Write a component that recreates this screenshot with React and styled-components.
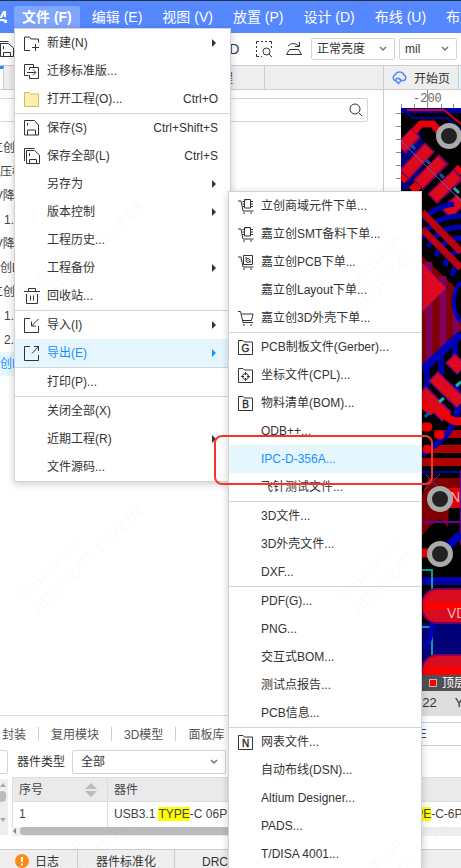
import React, { useState } from "react";
import styled, { createGlobalStyle } from "styled-components";

const GlobalStyle = createGlobalStyle`
  * {
    box-sizing: border-box;
  }
  body {
    margin: 0;
    background: #fff;
  }
  body, button, input, select, table {
    font-family: "Liberation Sans", "Noto Sans CJK SC", sans-serif;
    font-size: 12px;
    color: #333;
  }
`;

const Page = styled.div`
  position: relative;
  display: flex;
  flex-direction: column;
  height: 100vh;
  overflow: hidden;
  line-height: 16px;
`;

/* top bars */

const MenuBar = styled.nav`
  display: flex;
  align-items: center;
  gap: 4px;
  flex: none;
  height: 33px;
  border-top: 1px solid #26324a;
  background: #5588ff;
  overflow: hidden;
`;

const Logo = styled.svg`
  flex: none;
  width: 10px;
  height: 16px;
`;

const MenuButton = styled.button`
  flex: none;
  height: 22px;
  padding: 0 8px;
  border: none;
  border-radius: 2px;
  background: ${props => (props.$open ? "#7fa5ff" : "transparent")};
  color: #fff;
  font-size: 14px;
  font-weight: ${props => (props.$open ? "bold" : "normal")};
  line-height: 20px;
  white-space: nowrap;
`;

const Toolbar = styled.div`
  display: flex;
  align-items: center;
  flex: none;
  height: 32px;
  padding-right: 4px;
  gap: 4px;
  background: #fff;
`;

const ToolButton = styled.button`
  display: flex;
  align-items: center;
  justify-content: center;
  width: 26px;
  height: 24px;
  padding: 0;
  border: none;
  background: none;
  font-size: 14px;
`;

const TextTool = styled(ToolButton)`
  padding-right: 7px;
`;

const SaveTool = styled(ToolButton)`
  justify-content: flex-end;
  width: 14px;
  margin-right: auto;

  svg {
    flex: none;
  }
`;

const SelectBox = styled.div`
  position: relative;
  flex: none;
  width: ${props => props.$width}px;
  height: ${props => props.$height || 22}px;
`;

const Select = styled.select`
  width: 100%;
  height: 100%;
  padding: 0 20px 0 ${props => props.$indent || 5}px;
  border: 1px solid #d4d4d4;
  border-radius: 2px;
  background: #fff;
  appearance: none;
`;

const Chevron = styled.svg`
  position: absolute;
  right: 8px;
  top: 50%;
  width: 8px;
  height: 6px;
  margin-top: -3px;
  pointer-events: none;
`;

/* work area */

const Work = styled.div`
  display: flex;
  flex: 1;
  min-height: 0;
`;

const Side = styled.section`
  display: flex;
  flex-direction: column;
  flex: none;
  width: 384px;
  border-right: 1px solid #ccc;
`;

const TabRow = styled.div`
  display: flex;
  flex: none;
  height: 25px;
  border-top: 1px solid #ccc;
  border-bottom: 1px solid #ccc;
  background: #eee;
`;

const ActiveEdge = styled.div`
  width: 4px;
  border-top: 3px solid #1890ff;
  border-right: 1px solid #ccc;
  background: #fff;
`;

const SideTab = styled.button`
  width: 261px;
  padding: 0 31px 0 0;
  border: none;
  border-right: 1px solid #ccc;
  background: none;
  color: #1d3a7a;
  text-align: right;
`;

const Search = styled.label`
  display: flex;
  align-items: center;
  flex: none;
  height: 24px;
  margin: 8px 15px 14px 0;
  padding-right: 4px;
  border: 1px solid #d4d4d4;
  border-left: none;
  border-radius: 2px;
`;

const SearchInput = styled.input`
  flex: 1;
  min-width: 0;
  border: none;
  outline: none;
  background: none;
`;

const Tree = styled.ul`
  margin: 0 0 0 -12px;
  padding: 0;
  list-style: none;
`;

const TreeRow = styled.li`
  height: 24px;
  padding-left: ${props => props.$indent}px;
  background: ${props => (props.$active ? "#e6f7ff" : "none")};
  color: ${props => (props.$active ? "#1890ff" : "#444")};
  line-height: 24px;
  white-space: nowrap;
`;

const Editor = styled.section`
  display: flex;
  flex-direction: column;
  flex: 1;
  min-width: 0;
  overflow: hidden;
`;

const EditorTab = styled.button`
  display: flex;
  align-items: center;
  gap: 6px;
  flex: none;
  width: 75px;
  padding: 0 0 0 7px;
  border: none;
  border-right: 1px solid #ccc;
  background: none;
  white-space: nowrap;
`;

const EditorTabActive = styled.div`
  flex: 1;
  background: #e4f5ff;
`;

const Board = styled.div`
  display: grid;
  grid-template-columns: 17px 1fr;
  grid-template-rows: 18px 1fr;
  flex: 1;
  min-height: 0;
`;

const TopRuler = styled.svg`
  grid-column: 1 / 3;
  width: 100%;
  height: 18px;
`;

const SideRuler = styled.svg`
  width: 17px;
  height: 100%;
`;

const RulerText = styled.text`
  font-family: "Liberation Mono", monospace;
  font-size: 12px;
  fill: #666;
`;

const Pcb = styled.svg`
  width: 100%;
  height: 100%;
  min-height: 0;
  background: #000;
`;

const PadText = styled.text`
  font-size: 14px;
  fill: #ffb0b0;
`;

const LayerBar = styled.div`
  display: flex;
  align-items: center;
  gap: 5px;
  flex: none;
  height: 16px;
  padding-left: 45px;
  background: #505050;
  color: #fff;
  white-space: nowrap;
`;

const Swatch = styled.span`
  flex: none;
  width: 8px;
  height: 8px;
  border: 1px solid #bbb;
  background: #f00;
`;

const StatusBar = styled.div`
  display: flex;
  gap: 18px;
  flex: none;
  height: 24px;
  padding-left: 31px;
  background: #ddd;
  font-size: 13px;
  line-height: 24px;
  white-space: nowrap;
`;

/* bottom panel */

const Bottom = styled.section`
  flex: none;
  border-top: 1px solid #ddd;
`;

const LibTabs = styled.div`
  display: flex;
  align-items: center;
  height: 34px;
  padding: 2px 0 0 2px;
`;

const LibTab = styled.button`
  flex: none;
  height: 14px;
  margin-right: 12px;
  padding: 0 12px 0 0;
  border: none;
  border-right: 1px solid #ccc;
  background: none;
  color: #555;
  line-height: 16px;
`;

const LibInput = styled.input`
  flex: 1;
  min-width: 0;
  height: 24px;
  margin-left: 4px;
  padding: 0 0 0 141px;
  border: 1px solid #ccc;
  border-right: none;
  color: #1d4a8a;
`;

const Filters = styled.div`
  display: flex;
  align-items: center;
  height: 24px;
  margin-bottom: 3px;
`;

const FilterEdge = styled.div`
  width: 8px;
  height: 24px;
  margin-right: 9px;
  border: 1px solid #d4d4d4;
  border-left: none;
  border-radius: 0 2px 2px 0;
`;

const FilterLabel = styled.label`
  margin-right: 7px;
`;

const Results = styled.div`
  display: flex;
  height: 72px;
  padding-bottom: 14px;
`;

const ScrollV = styled.svg`
  flex: none;
  width: 8px;
  height: 58px;
  margin-right: 4px;
`;

const TableBox = styled.div`
  flex: 1;
  min-width: 0;
`;

const Table = styled.table`
  width: 100%;
  table-layout: fixed;
  border-collapse: collapse;
  color: #444;
`;

const Cell = styled.td`
  height: 25px;
  padding: 0 6px;
  border-left: 1px solid #ddd;
  line-height: 16px;
  text-align: left;
  white-space: nowrap;
  overflow: hidden;
`;

const HeadCell = styled(Cell)`
  height: 24px;
  border-top: 1px solid #ddd;
  border-bottom: 1px solid #ddd;
  background: #eaeaea;
  font-weight: normal;
`;

const HeadRow = styled.div`
  display: flex;
  align-items: center;
  justify-content: space-between;
  padding-right: 4px;
`;

const Mark = styled.mark`
  background: #ff0;
  color: inherit;
`;

const ScrollH = styled.div`
  display: flex;
  align-items: center;
  height: 9px;
  background: #eee;
`;

const Thumb = styled.div`
  width: 85%;
  height: 8px;
  margin-left: 3px;
  border-radius: 4px;
  background: #bbb;
`;

const Footer = styled.footer`
  display: flex;
  height: 19px;
  margin-left: -3px;
  border-top: 1px solid #ccc;
  background: #eee;
`;

const FooterTab = styled.button`
  display: flex;
  align-items: flex-start;
  justify-content: center;
  gap: 6px;
  flex: none;
  min-width: 81px;
  padding: 4px 18px 0;
  border: none;
  border-right: 1px solid #ccc;
  background: none;
  line-height: 16px;
  white-space: nowrap;
`;

/* drop-down menus */

const Menu = styled.div`
  position: absolute;
  top: ${props => props.$top}px;
  left: ${props => props.$left}px;
  width: ${props => props.$width}px;
  border: 1px solid #d4d4d4;
  background: #fff;
  box-shadow: 0 2px 8px rgba(0, 0, 0, 0.2);
`;

const MenuItem = styled.button`
  display: flex;
  align-items: center;
  width: 100%;
  height: 28px;
  padding: 0 12px 0 9px;
  border: none;
  background: ${props => (props.$active ? "#e6f6ff" : "none")};
  color: ${props => (props.$active ? "#1890ff" : "#333")};
  line-height: 14px;
  text-align: left;
  white-space: nowrap;
`;

const IconSlot = styled.span`
  display: flex;
  flex: none;
  width: 23px;
  color: ${props => (props.$light ? "#d6bb5c" : "#333")};
`;

const ItemText = styled.span`
  flex: 1;
`;

const Arrow = styled.span`
  margin-right: 2px;
  border-left: 4px solid currentColor;
  border-top: 4px solid transparent;
  border-bottom: 4px solid transparent;
`;

const Divider = styled.div`
  height: 1px;
  background: #d4d4d4;
`;

const Highlight = styled.div`
  position: absolute;
  top: 435px;
  left: 214px;
  width: 219px;
  height: 50px;
  border: 2px solid #f5352a;
  border-radius: 8px;
  pointer-events: none;
`;

const Watermarks = styled.div`
  position: absolute;
  top: -72px;
  left: 4px;
  display: grid;
  grid-template-columns: 152px 152px;
  column-gap: 168px;
  row-gap: 262px;
  color: rgba(120, 120, 120, 0.05);
  font-family: "Noto Sans", sans-serif;
  font-size: 16px;
  line-height: 20px;
  pointer-events: none;
`;

const Watermark = styled.div`
  height: 40px;
  white-space: nowrap;
  transform: rotate(-45deg);
`;

const strokes = {
  create: "M6 15.5H.5V2h5l1.5 2h7.5v3.5M11.5 9v7M8 12.5h7",
  migrate: "M4.5 12.5H.5V1.5h9v3M5.5 7V4.5h9v11h-9V12M3 9.5h8.500M9 6.500l3 3-3 3",
  save: "M.5.5h10l4 4.500v10H.5zM3.500 15v-5h8v5M3.500 3v2.500",
  saveAll: "M.5 13V.5h10M2.500 2.500h8l5 4.500v8.500h-13zM5.500 15.500v-4h7v4M5.500 5v3",
  trash: "M0 3.500h16M4.500 3V.5h7V3M2.500 6v9.500h11V6M6.500 7.500v5M9.500 7.500v5",
  import: "M6 1.500H.5v14h14V9M14.500 2l-7 7M7.500 4.500V9H12",
  export: "M6 1.500H.5v14h14V10M8 8.500l6.500-7M10 1.500h4.500V6",
  cart: "M0 1.500h2.500L5 12.500h10M3.500 4h11.500l-1.500 6.500H4.500M5 15h2M12 15h2",
  cartChip: "M0 3h3l2 10h10.500M6.500 1.500h6v8.500h-6zM8 1.500v1M4.500 3.500h2M4.500 6h2M4.500 8.500h2M12.500 3.500h2.500M12.500 6h2.500M12.500 8.500h2.500M5 15h2M12 15h2",
  cartPcb: "M0 3h3l2 10h10.500M5.500 1.500h9v9h-9zM5 15h2M12 15h2M7 4h2M12 8.500l1.500-1.500M8 6.500a2 2 0 1 0 4 0a2 2 0 1 0-4 0M10 6v1",
  folder: "M.5 1.500H5l1.500 1.500h8v12.500H.5z",
  target: "M.5 1.500H5l1.500 1.500h8v12.500H.5zM4.500 9.500a3 3 0 1 0 6 0a3 3 0 1 0-6 0M7.500 5v3M7.500 11v3M3 9.500h3M9 9.500h3",
};

const Icon = ({ name, letter, fill }) => (
  <svg width="16" height="16" viewBox="0 0 16 16" fill={fill || "none"} stroke="currentColor">
    <path d={strokes[name]} />
    {letter && (
      <text x="7.500" y="13" textAnchor="middle" fontSize="10" fill="#222" stroke="#222" strokeWidth="0.300">
        {letter}
      </text>
    )}
  </svg>
);

const Down = () => (
  <Chevron viewBox="0 0 8 6" fill="none" stroke="#777" strokeWidth="1.5">
    <path d="M1 1l3 3 3-3" />
  </Chevron>
);

const fileMenu = [
  { text: "新建(N)", icon: "create", more: true },
  { text: "迁移标准版...", icon: "migrate" },
  { text: "打开工程(O)...", icon: "folder", fill: "#fbf0ae", keys: "Ctrl+O" },
  null,
  { text: "保存(S)", icon: "save", keys: "Ctrl+Shift+S" },
  { text: "保存全部(L)", icon: "saveAll", keys: "Ctrl+S" },
  { text: "另存为", more: true },
  { text: "版本控制", more: true },
  { text: "工程历史..." },
  { text: "工程备份", more: true },
  { text: "回收站...", icon: "trash" },
  null,
  { text: "导入(I)", icon: "import", more: true },
  { text: "导出(E)", icon: "export", more: true, active: true },
  null,
  { text: "打印(P)..." },
  null,
  { text: "关闭全部(X)" },
  { text: "近期工程(R)", more: true },
  { text: "文件源码..." },
];

const exportMenu = [
  { text: "立创商域元件下单...", icon: "cartChip" },
  { text: "嘉立创SMT备料下单...", icon: "cartChip" },
  { text: "嘉立创PCB下单...", icon: "cartPcb" },
  { text: "嘉立创Layout下单..." },
  { text: "嘉立创3D外壳下单...", icon: "cart" },
  null,
  { text: "PCB制板文件(Gerber)...", icon: "folder", letter: "G" },
  { text: "坐标文件(CPL)...", icon: "target" },
  { text: "物料清单(BOM)...", icon: "folder", letter: "B" },
  { text: "ODB++..." },
  { text: "IPC-D-356A...", active: true },
  { text: "飞针测试文件..." },
  null,
  { text: "3D文件..." },
  { text: "3D外壳文件..." },
  { text: "DXF..." },
  null,
  { text: "PDF(G)..." },
  { text: "PNG..." },
  { text: "交互式BOM..." },
  { text: "测试点报告..." },
  { text: "PCB信息..." },
  null,
  { text: "网表文件...", icon: "folder", letter: "N" },
  { text: "自动布线(DSN)..." },
  { text: "Altium Designer..." },
  { text: "PADS..." },
  { text: "T/DISA 4001..." },
];

const tree = [
  { text: "立创开发板", indent: 3 },
  { text: "降压模块", indent: 0 },
  { text: "5V降压", indent: 0 },
  { text: "1. P1", indent: 16 },
  { text: "5V降压", indent: 0 },
  { text: "立创EDA", indent: 0 },
  { text: "立创EDA", indent: 3 },
  { text: "1. P1", indent: 16 },
  { text: "2. P2", indent: 16 },
  { text: "立创EDA", indent: 0, active: true },
];

const MenuList = ({ items }) =>
  items.map((item, index) => {
    if (!item) {
      return <Divider key={index} />;
    }
    return (
      <MenuItem key={index} $active={item.active}>
        <IconSlot $light={item.fill}>
          {item.icon && <Icon name={item.icon} letter={item.letter} fill={item.fill} />}
        </IconSlot>
        <ItemText>{item.text}</ItemText>
        {item.keys && <span>{item.keys}</span>}
        {item.more && <Arrow />}
      </MenuItem>
    );
  });

const Hole = ({ x, y }) => <circle cx={x} cy={y} r="10.500" fill="#222" stroke="#aaa" strokeWidth="5" />;

const PcbView = () => (
  <Pcb viewBox="401 108 60 567" preserveAspectRatio="xMinYMin slice">
    {/* upper pads */}
    <path d="M401 108h60v5h-60z" fill="#0000a0" />
    <path d="M401 108l12 10h34l14 12" fill="none" stroke="#0000a0" strokeWidth="2" />
    <path d="M407 110h37l17 14" fill="none" stroke="#d00020" strokeWidth="2" />
    <path d="M401 190v-44l18-16 5 14-2 28-14 18z" fill="#000078" />
    <path d="M404 142l17-18h12l7 9" fill="none" stroke="#e00010" strokeWidth="7" strokeLinecap="round" />
    <path d="M461 168l-8 8M401 180l14-14M412 191l10-10" stroke="#e80008" strokeWidth="9" />
    <g stroke="#7a0060" strokeWidth="14">
      <path d="M401 149l15-16M404 175l26-28M418 185l26-26M432 199l27-25M446 214l15-15" />
    </g>
    <g stroke="#dc0a1c" strokeWidth="11">
      <path d="M401 148l14-15M405 174l24-26M419 184l23-24M433 198l24-23M447 213l14-14" />
    </g>
    <path d="M411 145l4 4M426 160l4 4M440 174l4 4" stroke="#1050b0" strokeWidth="3" />
    <path d="M454 188l5 5" stroke="#18b0b0" strokeWidth="3" />
    <path d="M401 141l60 60" stroke="#6655e0" />
    <Hole x="449" y="136" />
    {/* traces behind the diagonal bus */}
    <g fill="none" stroke="#0000b4" strokeWidth="5">
      <path d="M422 220q14-14 32-16M422 238q10-22 39-22M428 247q10-20 33-20M436 256q8-18 25-18M445 266q4-14 16-15M452 276q3-12 9-12" />
    </g>
    <path d="M422 212l39 40M422 229l39 39" stroke="#b80010" strokeWidth="7" />
    <path d="M422 256l34 32 5 8v35l-39 36z" fill="#800000" />
    <path d="M429 262v98M443 276v71M456 289v46" stroke="#80005a" strokeWidth="7" />
    <path d="M422 263l24 25-24 24z" fill="#e00820" stroke="#80107a" />
    <path d="M461 282a20 26 0 0 0 0 40" fill="#000" stroke="#0000b4" strokeWidth="4" />
    {/* lower pads */}
    <path d="M427 367v30M441 353v30M455 340v20" stroke="#0000a0" strokeWidth="6" />
    <path d="M422 370l39-36" stroke="#0000b4" strokeWidth="8" />
    <path d="M434 434h27M429 449h32M422 462h39" stroke="#b00000" strokeWidth="8" />
    <path d="M456 385q8 35-16 56l-18 14" fill="none" stroke="#0000b4" strokeWidth="6" />
    <path d="M450 358l12 12M433 376l28 27M421 391l26 26" stroke="#7a0080" strokeWidth="14" />
    <path d="M451 359l10 10M434 377l27 26M422 392l24 24" stroke="#dc0a1c" strokeWidth="11" />
    <path d="M442 412l3 3q8 8 16 6M422 403l8 8" stroke="#f00000" strokeWidth="8" fill="none" strokeLinecap="round" />
    <path d="M425 427h3M440 435h.1M427 449h.1" stroke="#f00000" strokeWidth="9" strokeLinecap="round" />
    <path d="M425 417l5-5" stroke="#1050d0" strokeWidth="3" />
    <path d="M439 402l5-4M456 386l5-4" stroke="#18b0b0" strokeWidth="3" />
    {/* connector */}
    <path d="M422 472h39" stroke="#0000b0" strokeWidth="2" />
    <path d="M428 478h33v29h-12l-1 20-8-8-10 7-8 10v-40z" fill="#800000" />
    <path d="M448 488h13v20h-13z" fill="#e00010" />
    <path d="M425 474l18 18M440 474l-16 16" stroke="#7030a0" />
    <path d="M422 522h39M461 470v75" stroke="#6a00a0" strokeWidth="2" />
    <path d="M448 546l13-12" stroke="#0000b4" strokeWidth="8" />
    <path d="M422 553h12" stroke="#e00010" strokeWidth="9" />
    <path d="M422 623h39v52h-39z" fill="#000078" />
    <path d="M422 581h39" stroke="#0000a8" strokeWidth="8" />
    <path d="M422 570h10v85M422 627h10" fill="none" stroke="#00a0a8" strokeWidth="2" />
    <path d="M424 648q8-8 8-25" stroke="#0000b4" strokeWidth="5" fill="none" />
    <rect x="422" y="589" width="60" height="34" rx="15" fill="#d80c20" stroke="#7a0060" strokeWidth="2" />
    <path d="M423 602h38v8h-38z" fill="#ff0000" />
    <rect x="422" y="655" width="60" height="34" rx="15" fill="#d80c20" stroke="#7a0060" strokeWidth="2" />
    <path d="M423 667h38v8h-38z" fill="#ff0000" />
    <PadText x="450" y="502">ND</PadText>
    <PadText x="447" y="618">VDD</PadText>
    <Hole x="440" y="499" />
    <Hole x="440" y="554" />
  </Pcb>
);

const App = () => {
  const [keyword, setKeyword] = useState("");
  const [part, setPart] = useState("TYPE");

  const menus = ["编辑 (E)", "视图 (V)", "放置 (P)", "设计 (D)", "布线 (U)", "布局 (L)"];

  return (
    <Page>
      <GlobalStyle />
      <MenuBar>
        <Logo viewBox="0 0 10 16" fill="#fff">
          <path d="M0 8l3-6h3v6H4V5L2 9H0zM0 10h3l4 1v3H5l-2-2H0z" />
        </Logo>
        <MenuButton $open>文件 (F)</MenuButton>
        {menus.map(text => (
          <MenuButton key={text}>{text}</MenuButton>
        ))}
      </MenuBar>

      <Toolbar>
        <SaveTool aria-label="保存">
          <Icon name="saveAll" />
        </SaveTool>
        <TextTool>3D</TextTool>
        <ToolButton aria-label="框选查找">
          <svg width="16" height="16" viewBox="0 0 16 16" fill="none" stroke="#333">
            <path d="M.5 3V.5H3M5 .5h2M9 .5h2M13 .5h2.500V3M.5 5v2M.5 9v2M.5 13v2.500H3M15.500 5v2M5 15.500h1" />
            <circle cx="10.500" cy="10.500" r="3.500" />
            <path d="M13 13l3 3" />
          </svg>
        </ToolButton>
        <ToolButton aria-label="翻转板子">
          <svg width="16" height="14" viewBox="0 0 16 14" fill="none" stroke="#333">
            <path d="M3.500 7.500h9l3 5H.5zM2 4q5-5 11 0M13.500 0v4.500H9" />
          </svg>
        </ToolButton>
        <SelectBox $width={84}>
          <Select aria-label="亮度">
            <option>正常亮度</option>
          </Select>
          <Down />
        </SelectBox>
        <SelectBox $width={58}>
          <Select aria-label="单位">
            <option>mil</option>
          </Select>
          <Down />
        </SelectBox>
      </Toolbar>

      <Work>
        <Side>
          <TabRow>
            <ActiveEdge />
            <SideTab>所有工程</SideTab>
          </TabRow>
          <Search>
            <SearchInput aria-label="搜索" value={keyword} onChange={e => setKeyword(e.target.value)} />
            <svg width="14" height="14" viewBox="0 0 14 14" fill="none" stroke="#333">
              <circle cx="6" cy="6" r="5" />
              <path d="M10 10l3 3" />
            </svg>
          </Search>
          <Tree>
            {tree.map((row, index) => (
              <TreeRow key={index} $indent={row.indent} $active={row.active}>
                {row.text}
              </TreeRow>
            ))}
          </Tree>
        </Side>

        <Editor>
          <TabRow>
            <EditorTab>
              <svg width="17" height="14" viewBox="0 0 17 14" fill="none" stroke="#5588ff" strokeWidth="1.500">
                <path d="M5 9.500H4a3 3 0 0 1 0-5.500Q5 1 8.500 1T13 4a3 3 0 0 1 0 5.500h-2.500L7.500 7" />
                <path d="M5.500 7.500h2.500l2 2-2.500 3-2.500-2.500z" />
              </svg>
              开始页
            </EditorTab>
            <EditorTabActive />
          </TabRow>
          <Board>
            <TopRuler>
              <RulerText x="29" y="12">-200</RulerText>
              <path d="M17.500 14v4M30.500 14v4M43.500 0v18M57.500 14v4M69.500 14v4" stroke="#888" />
            </TopRuler>
            <SideRuler>
              <path d="M12 5.500h5M12 18.500h5M12 31.500h5M12 44.500h5M12 57.500h5M12 70.500h5" stroke="#888" />
            </SideRuler>
            <PcbView />
          </Board>
          <LayerBar>
            <Swatch />
            顶层
          </LayerBar>
          <StatusBar>
            <span>222</span>
            <span>Y</span>
          </StatusBar>
        </Editor>
      </Work>

      <Bottom>
        <LibTabs>
          <LibTab>封装</LibTab>
          <LibTab>复用模块</LibTab>
          <LibTab>3D模型</LibTab>
          <LibTab>面板库</LibTab>
          <LibInput aria-label="器件搜索" value={part} onChange={e => setPart(e.target.value)} />
        </LibTabs>
        <Filters>
          <FilterEdge />
          <FilterLabel htmlFor="kind">器件类型</FilterLabel>
          <SelectBox $width={154} $height={24}>
            <Select id="kind" $indent={8}>
              <option>全部</option>
            </Select>
            <Down />
          </SelectBox>
        </Filters>
        <Results>
          <ScrollV viewBox="0 0 8 58">
            <path d="M0 2h8v56H0z" fill="#eee" />
            <path d="M0 10l3-4 3 4zM0 41h6l-3 4z" fill="#aaa" />
            <rect x="-2" y="14" width="8" height="11" rx="4" fill="#bbb" />
          </ScrollV>
          <TableBox>
            <Table>
              <colgroup>
                <col width="95" />
                <col width="258" />
                <col />
              </colgroup>
              <thead>
                <tr>
                  <HeadCell as="th">
                    <HeadRow>
                      序号
                      <svg width="12" height="14" viewBox="0 0 12 14" fill="#bbb">
                        <path d="M0 6l6-6 6 6zM0 8h12l-6 6z" />
                      </svg>
                    </HeadRow>
                  </HeadCell>
                  <HeadCell as="th">器件</HeadCell>
                  <HeadCell as="th" />
                </tr>
              </thead>
              <tbody>
                <tr>
                  <Cell>1</Cell>
                  <Cell>
                    USB3.1 <Mark>TYPE</Mark>-C 06PIN
                  </Cell>
                  <Cell>
                    USB <Mark>TYPE</Mark>-C-6P
                  </Cell>
                </tr>
              </tbody>
            </Table>
            <ScrollH>
              <svg width="5" height="8" viewBox="0 0 5 8" fill="#888">
                <path d="M4 1v6L1 4z" />
              </svg>
              <Thumb />
            </ScrollH>
          </TableBox>
        </Results>
        <Footer>
          <FooterTab>
            <svg width="14" height="14" viewBox="0 0 14 14">
              <circle cx="7" cy="7" r="7" fill="#fa8c16" />
              <path d="M7 3v5M7 9.500v2" stroke="#fff" strokeWidth="2" />
            </svg>
            日志
          </FooterTab>
          <FooterTab>器件标准化</FooterTab>
          <FooterTab>DRC</FooterTab>
        </Footer>
      </Bottom>

      <Menu $top={28} $left={14} $width={217}>
        <MenuList items={fileMenu} />
      </Menu>
      <Menu $top={191} $left={228} $width={194}>
        <MenuList items={exportMenu} />
      </Menu>
      <Highlight />

      <Watermarks>
        {[0, 1, 2, 3, 4, 5, 6, 7].map(n => (
          <Watermark key={n}>
            ZouYuXuan
            <br />
            2025-12-01 11:28:08
          </Watermark>
        ))}
      </Watermarks>
    </Page>
  );
};

export default App;
